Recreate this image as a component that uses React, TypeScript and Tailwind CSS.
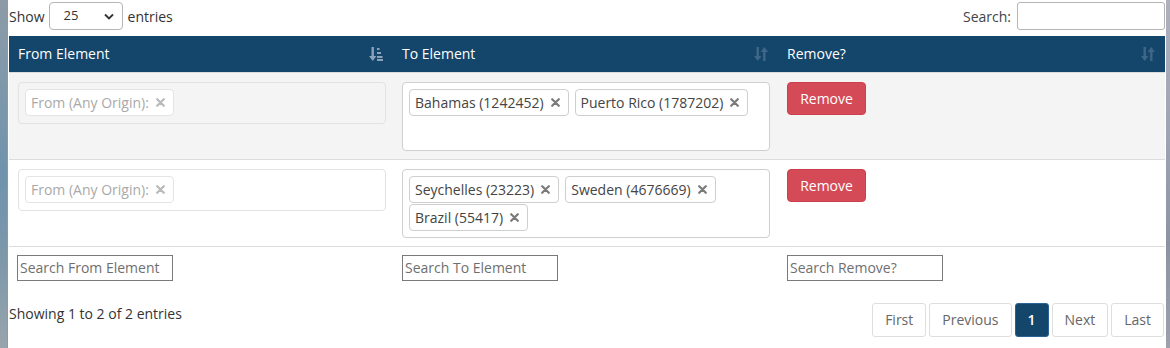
import React from "react";

const font = { fontFamily: '"Open Sans", "Noto Sans", Arial, sans-serif' };

function SortIcon({ active }: { active?: boolean }) {
  const c = active ? "#8aa3ba" : "#3f6688";
  if (active) {
    return (
      <svg width="14" height="16" viewBox="0 0 14 16" className="shrink-0">
        <rect x="2.5" y="1" width="2.4" height="10" fill={c} />
        <polygon points="0,10 7.4,10 3.7,15" fill={c} />
        <rect x="8" y="2" width="2.5" height="2" fill={c} />
        <rect x="8" y="6" width="4" height="2" fill={c} />
        <rect x="8" y="10" width="5.5" height="2" fill={c} />
        <rect x="8" y="13" width="6" height="2" fill={c} />
      </svg>
    );
  }
  return (
    <svg width="14" height="16" viewBox="0 0 14 16" className="shrink-0">
      <rect x="2.5" y="1" width="2.4" height="10" fill={c} />
      <polygon points="0,10 7.4,10 3.7,15" fill={c} />
      <rect x="9.1" y="5" width="2.4" height="10" fill={c} />
      <polygon points="6.6,6 14,6 10.3,1" fill={c} />
    </svg>
  );
}

function X({ color }: { color: string }) {
  return (
    <svg width="9" height="9" viewBox="0 0 9 9" className="shrink-0">
      <path d="M1.2 1.2 L7.8 7.8 M7.8 1.2 L1.2 7.8" stroke={color} strokeWidth="2.2" strokeLinecap="round" />
    </svg>
  );
}

function Tag({ label, disabled }: { label: string; disabled?: boolean }) {
  return (
    <span
      className={`inline-flex h-[27px] items-center gap-[7px] rounded-[4px] border bg-white pl-[5px] pr-[8px] text-[14px] ${
        disabled ? "border-[#e4e4e4] bg-transparent text-[#a9a9a9]" : "border-[#cfcfcf] text-[#444]"
      }`}
    >
      {label}
      <X color={disabled ? "#b9b9b9" : "#7a7a7a"} />
    </span>
  );
}

const rows = [
  { to: ["Bahamas (1242452)", "Puerto Rico (1787202)"], striped: true },
  { to: ["Seychelles (23223)", "Sweden (4676669)", "Brazil (55417)"], striped: false },
];

export default function App() {
  return (
    <div className="flex h-[348px] w-[1170px] overflow-hidden bg-white" style={font}>
      <div className="w-[7px] shrink-0 bg-[linear-gradient(180deg,#8d9ba6_0%,#7e98ab_25%,#6f93ad_50%,#7d98aa_75%,#98a4ad_100%)]" />
      <div className="w-[1px] shrink-0 bg-[#8e99a3]" />
      <div className="w-[1158px] shrink-0 bg-white pl-[1px] text-[14px] text-[#333]">
        {/* top controls */}
        <div className="flex h-[36px] items-start justify-between pt-[2px]">
          <div className="flex items-center">
            <span className="mr-[4px]">Show</span>
            <div className="flex h-[28px] w-[74px] items-center justify-between rounded-[4px] border border-[#b5b5b5] pl-[14px] pr-[8px] text-[13px]">
              <span>25</span>
              <svg width="10" height="7" viewBox="0 0 10 7">
                <path d="M1 1.5 L5 5.5 L9 1.5" stroke="#333" strokeWidth="1.8" fill="none" />
              </svg>
            </div>
            <span className="ml-[5px]">entries</span>
          </div>
          <div className="flex items-center pr-[1px]">
            <span className="mr-[6px] text-[#444]">Search:</span>
            <div className="h-[28px] w-[148px] rounded-[3px] border border-[#b5b5b5]" />
          </div>
        </div>

        {/* table */}
        <table className="w-[1156px] table-fixed border-collapse">
          <thead>
            <tr className="h-[36px] bg-[#14456a] text-white">
              {["From Element", "To Element", "Remove?"].map((h, i) => (
                <th key={h} className={`px-[9px] text-left font-medium ${i === 0 ? "w-[384px]" : i === 1 ? "w-[385px]" : ""}`}>
                  <div className="flex items-center justify-between pr-[1px]">
                    <span>{h}</span>
                    <SortIcon active={i === 0} />
                  </div>
                </th>
              ))}
            </tr>
          </thead>
          <tbody>
            {rows.map((r, idx) => (
              <tr key={idx} className={`border-t border-[#dcdcdc] ${r.striped ? "bg-[#f4f4f4]" : "bg-white"}`}>
                <td className="px-[9px] pt-[9px] pb-[8px] align-top">
                  <div className="flex h-[42px] w-[368px] items-start rounded-[4px] border border-[#e2e2e2] pl-[6px] pt-[6px]">
                    <Tag label="From (Any Origin):" disabled />
                  </div>
                </td>
                <td className="px-[9px] pt-[9px] pb-[8px] align-top">
                  <div className="flex min-h-[69px] w-[368px] flex-wrap content-start gap-x-[6px] gap-y-[1px] rounded-[4px] border border-[#cfcfcf] bg-white pl-[6px] pr-[6px] pt-[6px]">
                    {r.to.map((t) => (
                      <Tag key={t} label={t} />
                    ))}
                  </div>
                </td>
                <td className="px-[9px] pt-[9px] pb-[8px] align-top">
                  <button className="h-[33px] w-[79px] rounded-[4px] border border-[#cc3f4c] bg-[#d44a57] text-[14px] text-white">
                    Remove
                  </button>
                </td>
              </tr>
            ))}
          </tbody>
          <tfoot>
            <tr className="border-t border-[#dcdcdc]">
              {["Search From Element", "Search To Element", "Search Remove?"].map((p, i) => (
                <td key={p} className={`pt-[8px] pb-[0px] ${i === 0 ? "pl-[8px]" : "pl-[9px]"}`}>
                  <div className="flex h-[26px] w-[156px] items-center border border-[#7a7a7a] pl-[2px] text-[14px] text-[#6f6f6f]">
                    {p}
                  </div>
                </td>
              ))}
            </tr>
          </tfoot>
        </table>

        {/* footer */}
        <div className="mt-[22px] flex items-start justify-between">
          <div className="text-[#333]">Showing 1 to 2 of 2 entries</div>
          <div className="flex items-center gap-[3px] pr-[2px] text-[14px]">
            {["First", "Previous", "1", "Next", "Last"].map((b) => (
              <div
                key={b}
                className={`flex h-[34px] items-center justify-center rounded-[3px] border px-[12px] ${
                  b === "1"
                    ? "w-[34px] border-[#2a6496] bg-[#14456a] px-0 font-semibold text-white"
                    : "border-[#dedede] bg-white text-[#666]"
                }`}
              >
                {b}
              </div>
            ))}
          </div>
        </div>
      </div>
      <div className="flex-1 bg-[linear-gradient(180deg,#aeb0bd_0%,#9ea3b3_40%,#8b93a2_70%,#9da0ad_100%)]" />
    </div>
  );
}
